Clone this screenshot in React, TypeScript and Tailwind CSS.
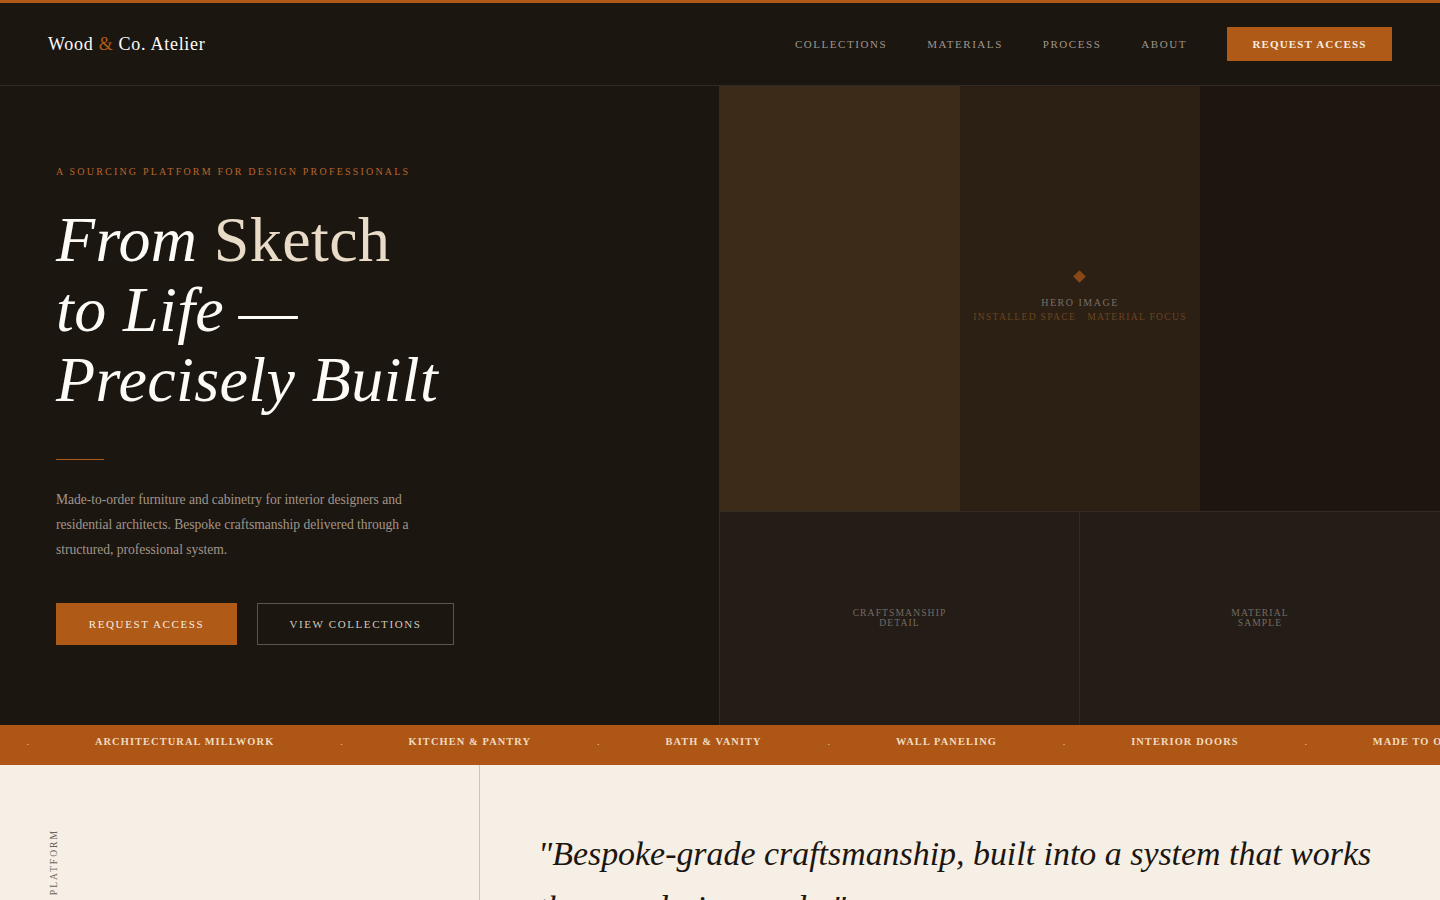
import React from 'react';

const navLinks = ['COLLECTIONS', 'MATERIALS', 'PROCESS', 'ABOUT'];
const tickerItems = [
  'ARCHITECTURAL MILLWORK',
  'KITCHEN & PANTRY',
  'BATH & VANITY',
  'WALL PANELING',
  'INTERIOR DOORS',
  'MADE TO ORDER',
];

const App: React.FC = () => {
  return (
    <div className="font-['Liberation_Serif',serif] bg-[#f5efe6] h-[900px] overflow-hidden">
      {/* nav */}
      <header className="h-[86px] bg-[#1c1610] border-t-[3px] border-b border-t-[#b05a18] border-b-[#322b25] flex items-center justify-between pl-12 pr-12">
        <div className="text-[18px] tracking-[0.72px] text-[#fdfbf7]">
          Wood <span className="text-[#b05a18]">&amp;</span> Co. Atelier
        </div>
        <nav className="flex items-center gap-10">
          {navLinks.map((l) => (
            <a key={l} className="text-[11px] tracking-[1.55px] text-[#a0958b]">{l}</a>
          ))}
          <button className="h-[34px] w-[165px] bg-[#b05a18] text-[11px] tracking-[1.15px] text-[#f5ede0] font-bold">
            REQUEST ACCESS
          </button>
        </nav>
      </header>

      {/* hero */}
      <section className="grid grid-cols-2 h-[639px] bg-[#1c1610]">
        <div className="pl-14 pt-[80px]">
          <p className="text-[10px] leading-[12px] tracking-[2.2px] text-[#b8652f]">A SOURCING PLATFORM FOR DESIGN PROFESSIONALS</p>
          <h1 className="mt-[27px] text-[64px] leading-[70px] tracking-[0.4px] font-normal text-[#fdfbf7]">
            <em>From</em> <span className="text-[#e8dcc8]">Sketch</span>
            <br />
            <em>to Life</em> <span className="text-[59px] leading-none ml-[-2px]">—</span>
            <br />
            <em>Precisely Built</em>
          </h1>
          <div className="mt-[44px] w-12 h-px bg-[#b05a18]" />
          <p className="mt-[27px] w-[380px] text-[13.6px] leading-[25px] tracking-[-0.03px] text-[#a0958b]">
            Made-to-order furniture and cabinetry for interior designers and residential architects. Bespoke craftsmanship delivered through a structured, professional system.
          </p>
          <div className="mt-[41px] flex gap-5">
            <button className="h-[42px] w-[181px] bg-[#b05a18] text-[11px] tracking-[1.6px] text-[#f5ede0]">REQUEST ACCESS</button>
            <button className="h-[42px] w-[197px] border border-[#5c544d] text-[11px] tracking-[1.6px] text-[#d4c9b8]">VIEW COLLECTIONS</button>
          </div>
        </div>

        <div className="grid grid-rows-[426px_213px] border-l border-l-[#322b25] -ml-px">
          <div className="relative grid grid-cols-3 border-b border-b-[#322b25]">
            <div className="bg-[#3d2b1a]" />
            <div className="bg-[#2c1f14]" />
            <div className="bg-[#1e1410]" />
            <div className="absolute inset-0 flex flex-col items-center justify-center pb-[2px]">
              <div className="w-[9px] h-[9px] rotate-45 bg-[#b05a18] opacity-70 -ml-px" />
              <div className="mt-[16px] text-[10px] leading-[12px] tracking-[1.5px] text-[#7a6f65]">HERO IMAGE</div>
              <div className="mt-[2px] text-[9.6px] leading-[12px] tracking-[1.3px] text-[#6b4520] whitespace-pre">INSTALLED SPACE   MATERIAL FOCUS</div>
            </div>
          </div>
          <div className="grid grid-cols-2 bg-[#241c17]">
            <div className="flex items-center justify-center border-r border-r-[#322b25] text-center text-[9.6px] leading-[10px] tracking-[1.1px] text-[#756b60] pb-[2px]">
              CRAFTSMANSHIP<br />DETAIL
            </div>
            <div className="flex items-center justify-center text-center text-[9.6px] leading-[10px] tracking-[1.1px] text-[#756b60] pb-[2px]">
              MATERIAL<br />SAMPLE
            </div>
          </div>
        </div>
      </section>

      {/* ticker */}
      <div className="h-10 bg-[#ae5616] flex items-baseline gap-[65.8px] pl-[26.5px] pt-[9px] overflow-hidden whitespace-nowrap">
        {tickerItems.map((t) => (
          <React.Fragment key={t}>
            <span className="text-[10.4px] text-[#e8c9a0]">.</span>
            <span className="text-[10.4px] font-bold tracking-[1.1px] text-[#f0dcc0]">{t}</span>
          </React.Fragment>
        ))}
      </div>

      {/* platform */}
      <section className="grid grid-cols-[480px_1fr]">
        <div className="border-r border-r-[#d4c4a8] pt-16 pl-[47px] h-[200px]">
          <div className="[writing-mode:vertical-rl] rotate-180 text-[9.6px] tracking-[2px] text-[#6b6158]">PLATFORM</div>
        </div>
        <div className="pl-[58px] pt-[62px] pr-12">
          <p className="italic text-[33.9px] leading-[54px] text-[#1c1610]">
            "Bespoke-grade craftsmanship, built into a system that works the way designers do."
          </p>
        </div>
      </section>
    </div>
  );
};

export default App;
